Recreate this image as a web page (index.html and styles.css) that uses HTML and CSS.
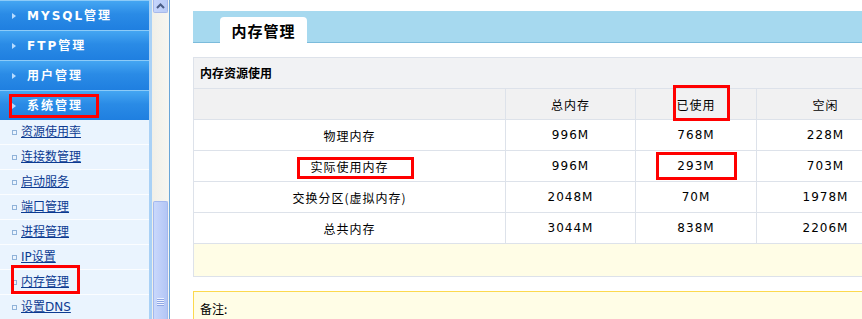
FILE: index.html
```html
<!DOCTYPE html>
<html lang="zh-CN">
<head>
    <meta charset="UTF-8">
    <title>内存管理</title>
    <link rel="stylesheet" href="styles.css">
</head>
<body>
    <aside class="sidebar">
        <nav class="menu">
            <div class="menu-bar"><span class="arrow"></span>MYSQL管理</div>
            <div class="menu-bar"><span class="arrow"></span>FTP管理</div>
            <div class="menu-bar"><span class="arrow"></span>用户管理</div>
            <div class="menu-bar marked"><span class="arrow"></span>系统管理</div>
            <ul class="sub-menu">
                <li><a href="#">资源使用率</a></li>
                <li><a href="#">连接数管理</a></li>
                <li><a href="#">启动服务</a></li>
                <li><a href="#">端口管理</a></li>
                <li><a href="#">进程管理</a></li>
                <li><a href="#">IP设置</a></li>
                <li class="marked"><a href="#">内存管理</a></li>
                <li><a href="#">设置DNS</a></li>
            </ul>
        </nav>
        <div class="gutter"></div>
        <div class="scrollbar">
            <div class="scroll-up">
                <svg width="9" height="6" viewBox="0 0 9 6"><path d="M1 5 L4.5 1.5 L8 5" fill="none" stroke="#4a5d86" stroke-width="2"/></svg>
            </div>
            <div class="scroll-thumb">
                <span class="grip"></span>
            </div>
        </div>
    </aside>

    <main class="main">
        <div class="tab-bar">
            <div class="tab">内存管理</div>
        </div>

        <section class="panel">
            <div class="panel-title">内存资源使用</div>
            <table class="mem-table">
                <tr class="head">
                    <td class="c1"></td>
                    <td class="c2">总内存</td>
                    <td class="c3 mark-used">已使用</td>
                    <td class="c4">空闲</td>
                </tr>
                <tr>
                    <td class="cn">物理内存</td>
                    <td>996M</td>
                    <td>768M</td>
                    <td>228M</td>
                </tr>
                <tr>
                    <td class="cn mark-real">实际使用内存</td>
                    <td>996M</td>
                    <td class="mark-num">293M</td>
                    <td>703M</td>
                </tr>
                <tr>
                    <td class="cn">交换分区(虚拟内存)</td>
                    <td>2048M</td>
                    <td>70M</td>
                    <td>1978M</td>
                </tr>
                <tr>
                    <td class="cn">总共内存</td>
                    <td>3044M</td>
                    <td>838M</td>
                    <td>2206M</td>
                </tr>
            </table>
            <div class="panel-foot"></div>
        </section>

        <div class="note">备注:</div>
    </main>
</body>
</html>
```

FILE: styles.css
```css
body {
    margin: 0;
    height: 319px;
    display: flex;
    overflow: hidden;
    font-family: "DejaVu Sans", "Noto Sans CJK SC", sans-serif;
    font-size: 12px;
    color: #000;
    background: #fff;
}

/* ---- left frame ---- */
.sidebar {
    width: 169px;
    flex: none;
    display: flex;
    border-right: 1px solid #6aa6d8;
    background: #eaf4fe;
}

.menu {
    width: 149px;
    flex: none;
}

.menu-bar {
    position: relative;
    height: 27px;
    padding-top: 2px;
    border-top: 1px solid #8ccbf8;
    background: linear-gradient(#44a6f2, #2a8be6 45%, #1f7fe0);
    color: #fff;
    font-weight: bold;
    letter-spacing: 2px;
    line-height: 27px;
    padding-left: 27px;
}

.arrow {
    position: absolute;
    left: 12px;
    top: 12px;
    width: 0;
    height: 0;
    border-top: 3px solid transparent;
    border-bottom: 3px solid transparent;
    border-left: 4px solid #b8dcff;
}

.menu-bar.marked::after {
    content: "";
    position: absolute;
    left: 9px;
    top: 3px;
    width: 84px;
    height: 18px;
    border: 3px solid #f00;
}

.sub-menu {
    list-style: none;
    margin: 0;
    padding: 0;
}

.sub-menu li {
    position: relative;
    height: 24px;
    line-height: 24px;
    border-bottom: 1px solid #fbfdff;
    padding-left: 21px;
}

.sub-menu li::before {
    content: "";
    position: absolute;
    left: 12px;
    top: 10px;
    width: 3px;
    height: 3px;
    border: 1px solid #8fb2d9;
}

.sub-menu a {
    color: #0c3b92;
    text-decoration: underline;
}

.sub-menu li.marked::after {
    content: "";
    position: absolute;
    left: 11px;
    top: -5px;
    width: 63px;
    height: 23px;
    border: 3px solid #f00;
    z-index: 1;
}

.gutter {
    width: 3px;
    flex: none;
    background: #a9d1f6;
}

.scrollbar {
    width: 17px;
    flex: none;
    display: flex;
    flex-direction: column;
    background: linear-gradient(90deg, #f0efe8, #f7f6f1);
}

.scroll-up {
    height: 12px;
    margin: 0 1px 0 1px;
    border: 1px solid #a7b9ea;
    border-top: none;
    border-radius: 0 0 2px 2px;
    background: linear-gradient(90deg, #c5d5fc, #b9cbf7);
    display: flex;
    align-items: center;
    justify-content: center;
}

.scroll-thumb {
    margin: 188px 1px 0 1px;
    flex: 1;
    border: 1px solid #a3b8ee;
    border-bottom: none;
    border-radius: 2px 2px 0 0;
    background: linear-gradient(90deg, #c9d8fc, #bccdf8 60%, #b3c6f5);
    position: relative;
}

.grip {
    position: absolute;
    left: 3px;
    top: 96px;
    width: 7px;
    height: 8px;
    background: repeating-linear-gradient(#eef3ff 0 1px, #8ea6e4 1px 2px);
}

/* ---- main frame ---- */
.main {
    flex: none;
    width: 700px;
    padding: 11px 0 0 23px;
}

.tab-bar {
    height: 31px;
    background: #a6d9ef;
    border-bottom: 1px solid #7bbbdb;
    display: flex;
    align-items: flex-end;
    padding-left: 27px;
}

.tab {
    width: 87px;
    height: 26px;
    margin-bottom: -1px;
    background: #fff;
    border-radius: 4px 4px 0 0;
    font-family: "Noto Sans CJK SC", sans-serif;
    font-weight: bold;
    font-size: 15px;
    letter-spacing: 1px;
    line-height: 27px;
    text-align: center;
}

.panel {
    margin-top: 14px;
    border: 1px solid #dde2ea;
    width: 700px;
}

.panel-title {
    height: 30px;
    line-height: 30px;
    padding-left: 6px;
    background: #f1f2f4;
    border-bottom: 1px solid #dde2ea;
    font-family: "Noto Sans CJK SC", sans-serif;
    font-weight: bold;
}

.mem-table {
    border-collapse: collapse;
    table-layout: fixed;
    width: 700px;
}

.mem-table td {
    height: 30px;
    padding: 0;
    text-align: center;
    border-bottom: 1px solid #dde2ea;
    border-left: 1px solid #dde2ea;
    letter-spacing: 1px;
}

.mem-table td:first-child {
    border-left: none;
}

.mem-table .c1 { width: 311px; }
.mem-table .c2 { width: 129px; }
.mem-table .c3 { width: 120px; }

.mem-table .head td {
    background: #f1f1f2;
    font-family: "Noto Sans CJK SC", sans-serif;
}

.mem-table .cn {
    font-family: "Noto Sans CJK SC", sans-serif;
}

.mark-used,
.mark-real,
.mark-num {
    position: relative;
}

.mark-used::after,
.mark-real::after,
.mark-num::after {
    content: "";
    position: absolute;
    border: 3px solid #f00;
}

.mark-used::after {
    left: 37px;
    top: -4px;
    width: 51px;
    height: 30px;
}

.mark-real::after {
    left: 103px;
    top: 6px;
    width: 111px;
    height: 16px;
}

.mark-num::after {
    left: 20px;
    top: 1px;
    width: 75px;
    height: 22px;
}

.panel-foot {
    height: 32px;
    background: #fffde6;
}

.note {
    margin-top: 14px;
    height: 40px;
    border-top: 1px solid #fcd94e;
    border-left: 1px solid #fcd94e;
    background: #fffde6;
    padding: 8px 0 0 6px;
    box-sizing: border-box;
    font-family: "Noto Sans CJK SC", sans-serif;
    width: 700px;
}
```
